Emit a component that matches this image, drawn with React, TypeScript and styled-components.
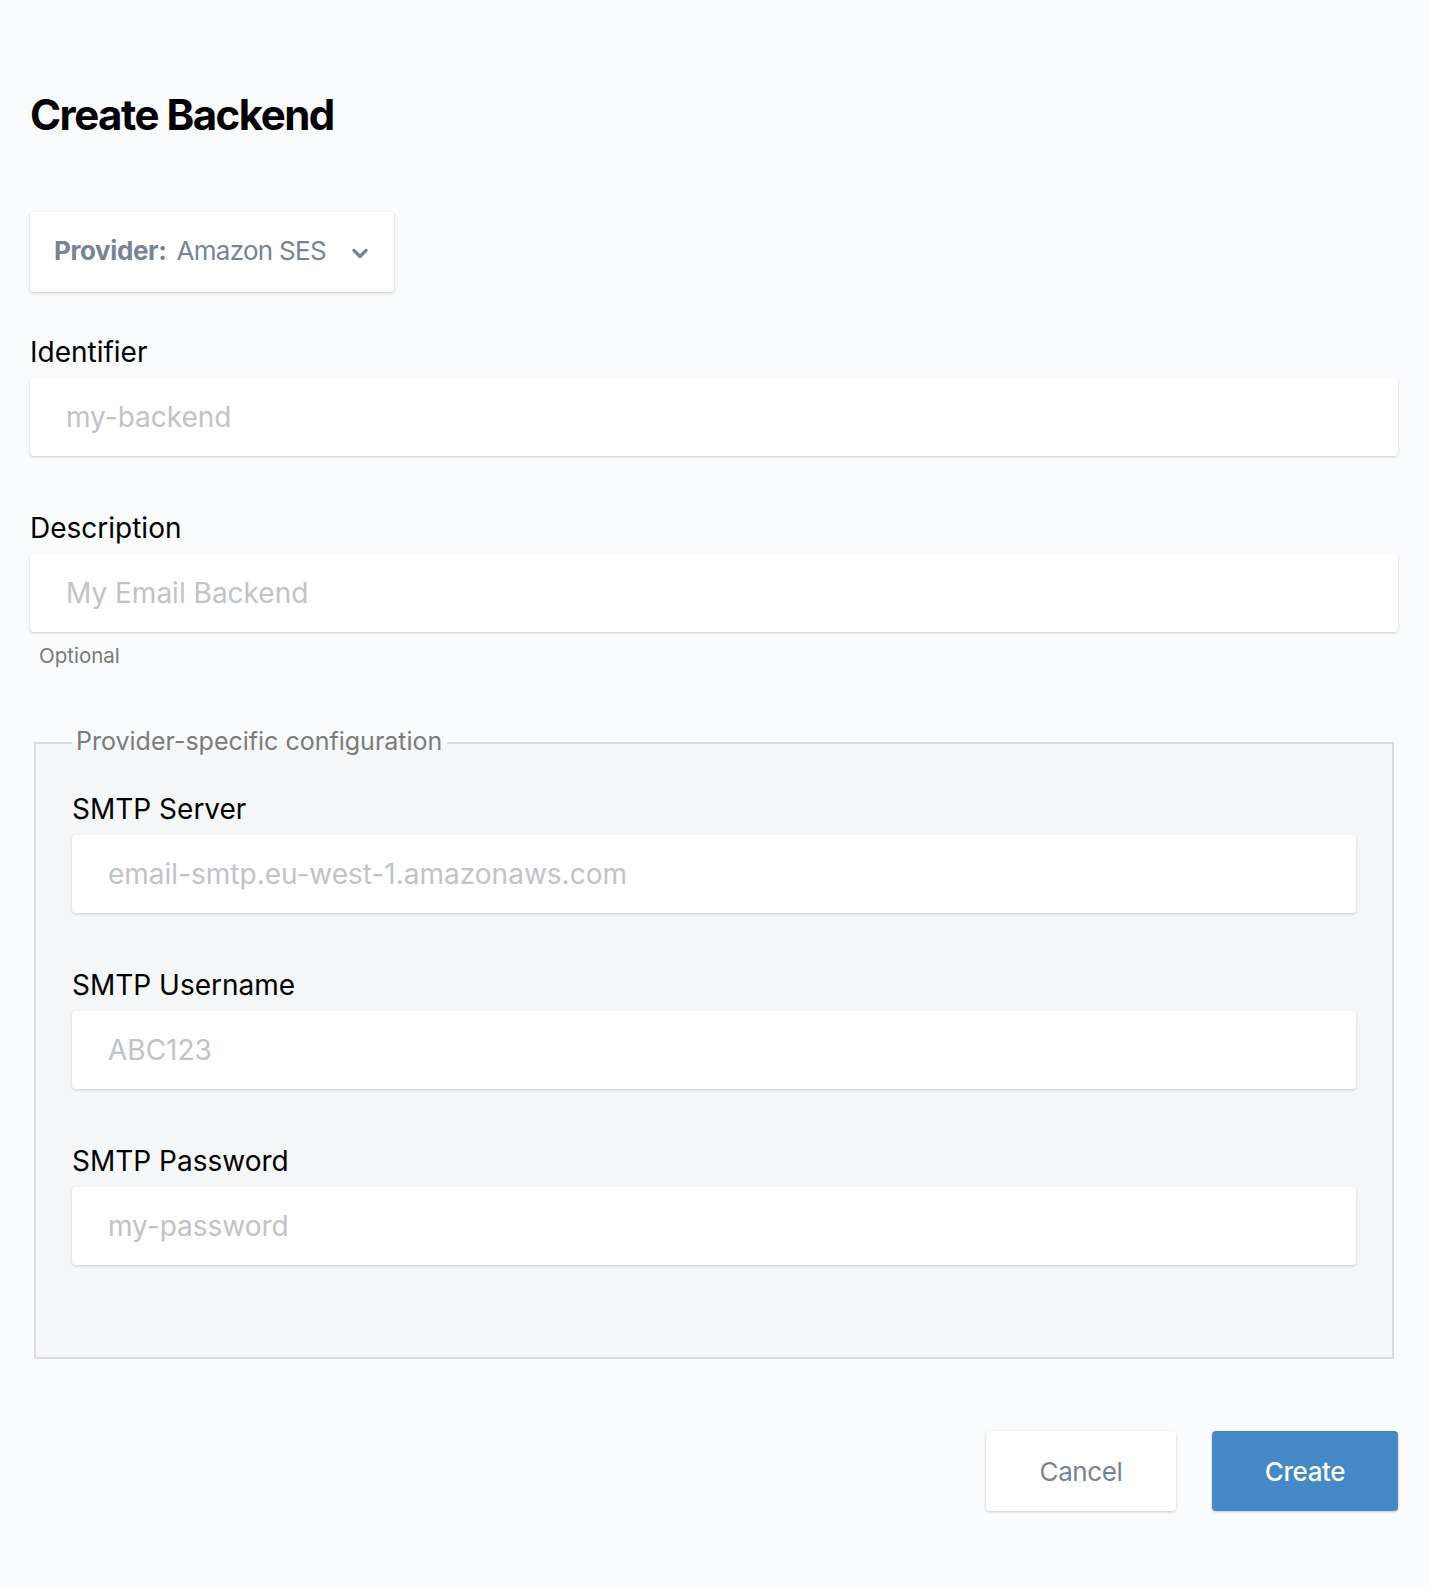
import React from "react";
import styled, { createGlobalStyle } from "styled-components";

const GlobalStyle = createGlobalStyle`
  html, body {
    margin: 0;
    padding: 0;
    background: #f9fbfd;
  }
  body {
    font-family: Inter, "Noto Sans", sans-serif;
    color: #000;
  }
  * {
    box-sizing: border-box;
  }
`;

const Page = styled.div`
  min-height: 1590px;
  padding: 89px 32px 80px 30px;
  background: #f9fbfd;
`;

const Title = styled.h1`
  margin: 0;
  font-size: 42px;
  line-height: 52px;
  font-weight: 700;
  letter-spacing: -1.5px;
  color: #000;
`;

const Select = styled.div`
  margin-top: 71px;
  width: 364px;
  height: 80px;
  display: flex;
  align-items: center;
  padding: 0 26px 3px 24px;
  background: #fff;
  border-radius: 4px;
  box-shadow: 0 1px 3px rgba(0, 0, 0, 0.2);
  color: #778396;
  font-size: 26px;
  line-height: 34px;
  letter-spacing: -0.4px;
  white-space: nowrap;
  cursor: pointer;
`;

const SelectLabel = styled.span`
  font-weight: 700;
  margin-right: 10px;
`;

const SelectValue = styled.span`
  flex: 1;
  letter-spacing: -0.7px;
`;

const Chevron = styled.svg`
  width: 16px;
  height: 11px;
  margin-top: 5px;
`;

const Field = styled.div<{ $gap?: number }>`
  margin-top: ${(p) => p.$gap ?? 55}px;
`;

const Label = styled.label`
  display: block;
  font-size: 28px;
  line-height: 34px;
  color: #000;
  margin-bottom: 9px;
`;

const Input = styled.input`
  display: block;
  width: 100%;
  height: 78px;
  padding: 0 36px;
  border: none;
  border-radius: 4px;
  background: #fff;
  box-shadow: 0 1px 3px rgba(0, 0, 0, 0.18);
  font-family: Inter, "Noto Sans", sans-serif;
  font-size: 28px;
  color: #333;
  &::placeholder {
    color: #c1c3c8;
  }
  &:focus {
    outline: none;
  }
`;

const Hint = styled.div`
  margin: 12px 0 0 9px;
  font-size: 20.5px;
  line-height: 24px;
  color: #7a7a7a;
`;

const Fieldset = styled.fieldset`
  margin: 59px 4px 0;
  padding: 33px 36px 92px;
  border: 2px solid #dcdcdf;
  background: #f5f6f8;
  min-width: 0;
`;

const Legend = styled.legend`
  padding: 0 5px 4px 4px;
  font-size: 25px;
  line-height: 28px;
  color: #7b7b7b;
`;

const Actions = styled.div`
  margin-top: 72px;
  display: flex;
  justify-content: flex-end;
  gap: 36px;
`;

const Button = styled.button<{ $primary?: boolean }>`
  height: 80px;
  width: ${(p) => (p.$primary ? 186 : 190)}px;
  border: none;
  border-radius: 4px;
  font-family: Inter, "Noto Sans", sans-serif;
  font-size: 26px;
  letter-spacing: -0.4px;
  cursor: pointer;
  background: ${(p) => (p.$primary ? "#4488c5" : "#fff")};
  color: ${(p) => (p.$primary ? "#fff" : "#7a8292")};
  font-weight: ${(p) => (p.$primary ? 500 : 400)};
  box-shadow: 0 1px 3px rgba(0, 0, 0, 0.2);
`;

type FieldDef = { id: string; label: string; placeholder: string };

const smtpFields: FieldDef[] = [
  { id: "server", label: "SMTP Server", placeholder: "email-smtp.eu-west-1.amazonaws.com" },
  { id: "username", label: "SMTP Username", placeholder: "ABC123" },
  { id: "password", label: "SMTP Password", placeholder: "my-password" },
];

const App = () => {
  return (
    <Page>
      <GlobalStyle />
      <Title>Create Backend</Title>

      <Select>
        <SelectLabel>Provider:</SelectLabel>
        <SelectValue>Amazon SES</SelectValue>
        <Chevron viewBox="0 0 16 11" fill="none">
          <path
            d="M2 2.5 L8 8.5 L14 2.5"
            stroke="#778396"
            strokeWidth={3.2}
            strokeLinecap="round"
            strokeLinejoin="round"
          />
        </Chevron>
      </Select>

      <Field $gap={43}>
        <Label htmlFor="identifier">Identifier</Label>
        <Input id="identifier" placeholder="my-backend" />
      </Field>

      <Field>
        <Label htmlFor="description">Description</Label>
        <Input id="description" placeholder="My Email Backend" />
        <Hint>Optional</Hint>
      </Field>

      <Fieldset>
        <Legend>Provider-specific configuration</Legend>
        {smtpFields.map((f, i) => (
          <Field key={f.id} $gap={i === 0 ? 0 : 55}>
            <Label htmlFor={f.id}>{f.label}</Label>
            <Input
              id={f.id}
              type={f.id === "password" ? "password" : "text"}
              placeholder={f.placeholder}
            />
          </Field>
        ))}
      </Fieldset>

      <Actions>
        <Button type="button">Cancel</Button>
        <Button type="button" $primary>
          Create
        </Button>
      </Actions>
    </Page>
  );
};

export default App;
